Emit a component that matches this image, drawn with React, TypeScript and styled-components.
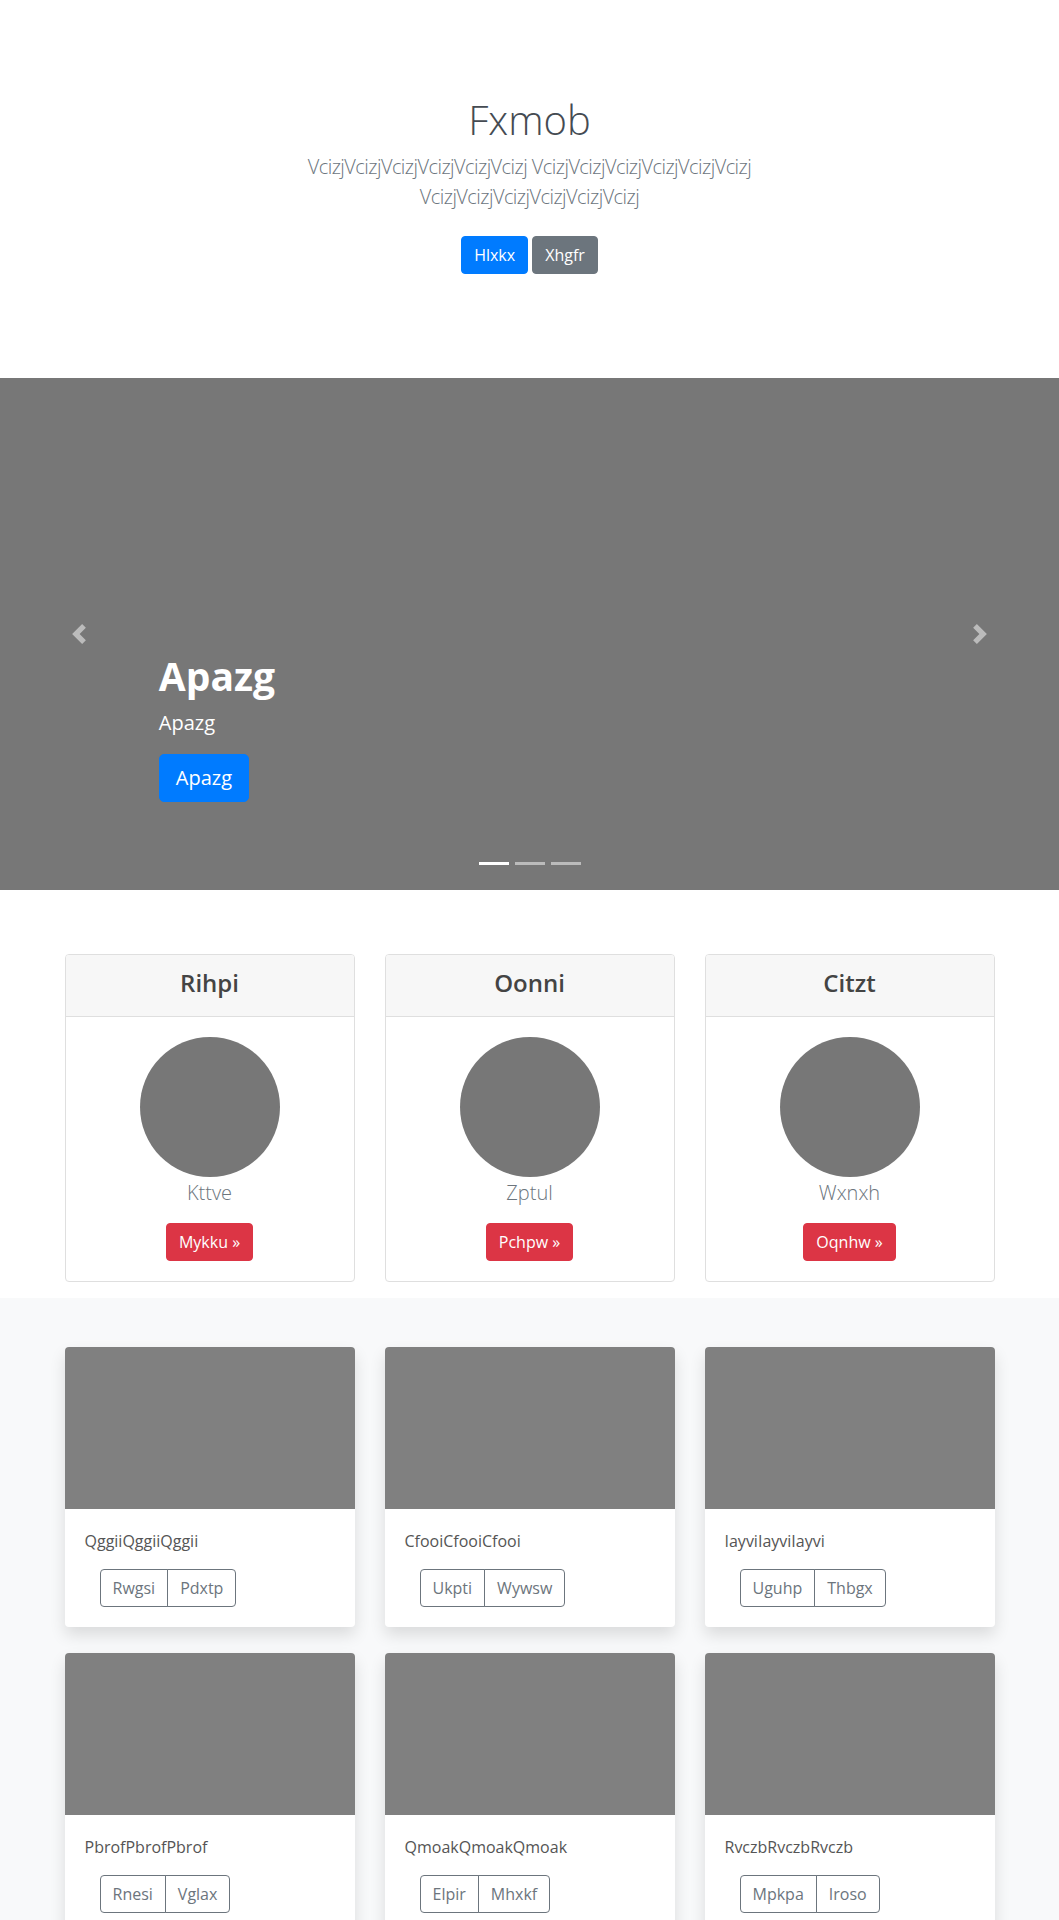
import React from "react";
import styled, { createGlobalStyle } from "styled-components";

const GlobalStyle = createGlobalStyle`
  html, body { margin: 0; padding: 0; background: #fff; }
  body {
    font-family: "Open Sans", "Noto Sans", "Liberation Sans", sans-serif;
    color: #212529;
    font-size: 16px;
    line-height: 1.5;
  }
  * { box-sizing: border-box; }
`;

const Hero = styled.section`
  text-align: center;
  padding: 96px 0 104px;
`;

const HeroInner = styled.div`
  max-width: 560px;
  margin: 0 auto;
`;

const HeroTitle = styled.h1`
  margin: 0 0 8px;
  font-size: 40px;
  line-height: 1.2;
  font-weight: 300;
  color: #454b52;
`;

const Lead = styled.p`
  margin: 0 0 24px;
  font-size: 20px;
  line-height: 1.5;
  font-weight: 300;
  letter-spacing: -0.55px;
  color: #6c757d;
`;

const ButtonRow = styled.div`
  display: flex;
  justify-content: center;
  gap: 4px;
`;

const Btn = styled.button<{ $variant: "primary" | "secondary" | "danger" }>`
  font-family: inherit;
  font-size: 16px;
  line-height: 24px;
  padding: 6px 12px;
  border-radius: 4px;
  color: #fff;
  cursor: pointer;
  border: 1px solid
    ${(p) => (p.$variant === "primary" ? "#007bff" : p.$variant === "danger" ? "#dc3545" : "#6c757d")};
  background: ${(p) => (p.$variant === "primary" ? "#007bff" : p.$variant === "danger" ? "#dc3545" : "#6c757d")};
`;

const Carousel = styled.div`
  position: relative;
  height: 512px;
  background: #777;
  overflow: hidden;
`;

const Slide = styled.div`
  height: 100%;
  display: flex;
  flex-direction: column;
  justify-content: flex-end;
  align-items: flex-start;
  padding: 0 15% 88px;
  color: #fff;
`;

const CaptionTitle = styled.h2`
  margin: 0 0 8px;
  font-size: 39px;
  line-height: 48px;
  font-weight: 700;
`;

const CaptionText = styled.p`
  margin: 0 0 16px;
  font-size: 20px;
  line-height: 1.5;
`;

const BigBtn = styled.button`
  font-family: inherit;
  font-size: 20px;
  line-height: 30px;
  padding: 8px 16px;
  border-radius: 5px;
  border: 1px solid #007bff;
  background: #007bff;
  color: #fff;
`;

const Control = styled.div<{ $side: "left" | "right" }>`
  position: absolute;
  top: 0;
  bottom: 0;
  ${(p) => p.$side}: 0;
  width: 15%;
  display: flex;
  align-items: center;
  justify-content: center;
  opacity: 0.5;
`;

const Indicators = styled.ol`
  position: absolute;
  left: 0;
  right: 0;
  bottom: 25px;
  margin: 0;
  padding: 0;
  list-style: none;
  display: flex;
  justify-content: center;
  gap: 6px;
`;

const Indicator = styled.li<{ $active?: boolean }>`
  width: 30px;
  height: 3px;
  background: ${(p) => (p.$active ? "#fff" : "rgba(255,255,255,0.5)")};
`;

const Container = styled.div`
  width: 930px;
  margin: 0 auto;
`;

const PricingSection = styled.section`
  padding: 64px 0 16px;
`;

const Grid = styled.div<{ $rowGap: number }>`
  display: grid;
  grid-template-columns: repeat(3, 290px);
  column-gap: 30px;
  row-gap: ${(p) => p.$rowGap}px;
`;

const PriceCard = styled.div`
  border: 1px solid #dfdfdf;
  border-radius: 4px;
  background: #fff;
  overflow: hidden;
  text-align: center;
`;

const PriceHeader = styled.div`
  background: #f7f7f7;
  border-bottom: 1px solid #dfdfdf;
  padding: 13px 20px 19px;
`;

const PriceTitle = styled.h4`
  margin: 0;
  font-size: 24px;
  line-height: 29px;
  font-weight: 600;
  color: #444;
`;

const PriceBody = styled.div`
  padding: 20px 20px 20px;
  display: flex;
  flex-direction: column;
  align-items: center;
`;

const Avatar = styled.div`
  width: 140px;
  height: 140px;
  border-radius: 50%;
  background: #777;
`;

const Name = styled.p`
  margin: 1px 0 15px;
  font-size: 20px;
  line-height: 30px;
  font-weight: 300;
  color: #6c757d;
`;

const AlbumSection = styled.section`
  background: #f8f9fa;
  padding: 49px 0 40px;
`;

const AlbumCard = styled.div`
  background: #fff;
  border-radius: 4px;
  overflow: hidden;
  box-shadow: 0 8px 16px rgba(0, 0, 0, 0.12);
`;

const Thumb = styled.div`
  height: 162px;
  background: #808080;
`;

const AlbumBody = styled.div`
  padding: 20px;
`;

const AlbumText = styled.p`
  margin: 0 0 16px;
  font-size: 16px;
  line-height: 24px;
  color: #555;
`;

const BtnGroup = styled.div`
  display: inline-flex;
  margin-left: 15px;
`;

const OutlineBtn = styled.button`
  font-family: inherit;
  font-size: 16px;
  line-height: 24px;
  padding: 6px 12px;
  background: transparent;
  color: #6c757d;
  border: 1px solid #6c757d;
  border-radius: 0;
  & + & { margin-left: -1px; }
  &:first-child { border-radius: 4px 0 0 4px; }
  &:last-child { border-radius: 0 4px 4px 0; }
`;

const ChevronLeft = () => (
  <svg width="20" height="20" viewBox="0 0 8 8" fill="#fff">
    <path d="M5.25 0l-4 4 4 4 1.5-1.5L4.25 4l2.5-2.5L5.25 0z" />
  </svg>
);

const ChevronRight = () => (
  <svg width="20" height="20" viewBox="0 0 8 8" fill="#fff">
    <path d="M2.75 0l-1.5 1.5L3.75 4l-2.5 2.5L2.75 8l4-4-4-4z" />
  </svg>
);

const pricing = [
  { title: "Rihpi", name: "Kttve", btn: "Mykku »" },
  { title: "Oonni", name: "Zptul", btn: "Pchpw »" },
  { title: "Citzt", name: "Wxnxh", btn: "Oqnhw »" },
];

const album = [
  { text: "QggiiQggiiQggii", a: "Rwgsi", b: "Pdxtp" },
  { text: "CfooiCfooiCfooi", a: "Ukpti", b: "Wywsw" },
  { text: "IayviIayviIayvi", a: "Uguhp", b: "Thbgx" },
  { text: "PbrofPbrofPbrof", a: "Rnesi", b: "Vglax" },
  { text: "QmoakQmoakQmoak", a: "Elpir", b: "Mhxkf" },
  { text: "RvczbRvczbRvczb", a: "Mpkpa", b: "Iroso" },
];

export default function App() {
  return (
    <>
      <GlobalStyle />
      <Hero>
        <HeroInner>
          <HeroTitle>Fxmob</HeroTitle>
          <Lead>
            VcizjVcizjVcizjVcizjVcizjVcizj VcizjVcizjVcizjVcizjVcizjVcizj VcizjVcizjVcizjVcizjVcizjVcizj
          </Lead>
          <ButtonRow>
            <Btn $variant="primary">Hlxkx</Btn>
            <Btn $variant="secondary">Xhgfr</Btn>
          </ButtonRow>
        </HeroInner>
      </Hero>

      <Carousel>
        <Slide>
          <CaptionTitle>Apazg</CaptionTitle>
          <CaptionText>Apazg</CaptionText>
          <BigBtn>Apazg</BigBtn>
        </Slide>
        <Control $side="left">
          <ChevronLeft />
        </Control>
        <Control $side="right">
          <ChevronRight />
        </Control>
        <Indicators>
          <Indicator $active />
          <Indicator />
          <Indicator />
        </Indicators>
      </Carousel>

      <PricingSection>
        <Container>
          <Grid $rowGap={0}>
            {pricing.map((p) => (
              <PriceCard key={p.title}>
                <PriceHeader>
                  <PriceTitle>{p.title}</PriceTitle>
                </PriceHeader>
                <PriceBody>
                  <Avatar />
                  <Name>{p.name}</Name>
                  <Btn $variant="danger">{p.btn}</Btn>
                </PriceBody>
              </PriceCard>
            ))}
          </Grid>
        </Container>
      </PricingSection>

      <AlbumSection>
        <Container>
          <Grid $rowGap={26}>
            {album.map((c) => (
              <AlbumCard key={c.text}>
                <Thumb />
                <AlbumBody>
                  <AlbumText>{c.text}</AlbumText>
                  <BtnGroup>
                    <OutlineBtn>{c.a}</OutlineBtn>
                    <OutlineBtn>{c.b}</OutlineBtn>
                  </BtnGroup>
                </AlbumBody>
              </AlbumCard>
            ))}
          </Grid>
        </Container>
      </AlbumSection>
    </>
  );
}
